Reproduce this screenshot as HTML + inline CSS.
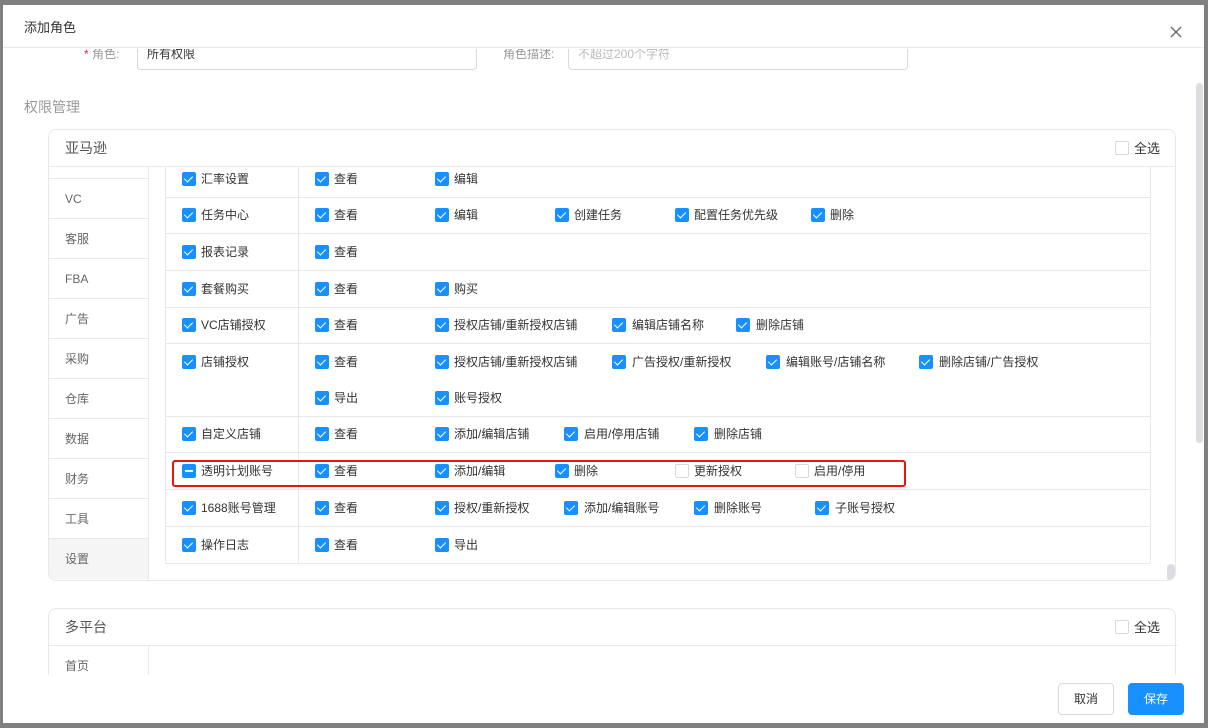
<!DOCTYPE html>
<html><head><meta charset="utf-8"><style>
*{margin:0;padding:0;box-sizing:border-box}
body{width:1208px;height:728px;background:#808080;position:relative;overflow:hidden;font-family:"Liberation Sans","Noto Sans CJK SC",sans-serif;font-size:12px;color:#333}
.a{position:absolute}
.m{position:absolute;left:3px;top:5px;width:1201px;height:718px;background:#fff;overflow:hidden}
.c{position:absolute;width:14px;height:14px;border-radius:2px;background:#1890ff}
.c:after{content:"";position:absolute;left:4px;top:2px;width:4px;height:7px;border:solid #fff;border-width:0 1.5px 1.5px 0;transform:rotate(45deg)}
.u{background:#fff;border:1px solid #d9d9d9}
.u:after{display:none}
.i:after{left:3px;top:6px;width:8px;height:2px;border:0;background:#fff;transform:none}
.t{position:absolute;white-space:nowrap;line-height:14px}
.h{position:absolute;height:1px;background:#e8e8e8}
.v{position:absolute;width:1px;background:#e8e8e8}
.mi{position:absolute;left:0;width:99px;height:40px;line-height:40px;padding-left:16px;color:#666;border-bottom:1px solid #e8e8e8;font-size:12px}
</style></head><body>
<div class="m">
<div class="a" style="left:0;top:44px;width:1201px;height:626px;overflow:hidden">
 <div class="a" style="left:-3px;top:-49px;width:1208px;height:728px">
  <div class="t" style="left:84px;top:47px;color:#999"><span style="color:#f5222d">*</span> 角色:</div>
  <div class="a" style="left:137px;top:38px;width:340px;height:32px;border:1px solid #d9d9d9;border-radius:4px"></div>
  <div class="t" style="left:147px;top:47px;color:#333">所有权限</div>
  <div class="t" style="left:503px;top:47px;color:#999">角色描述:</div>
  <div class="a" style="left:568px;top:38px;width:340px;height:32px;border:1px solid #d9d9d9;border-radius:4px"></div>
  <div class="t" style="left:578px;top:47px;color:#bbb">不超过200个字符</div>
  <div class="t" style="left:24px;top:100px;font-size:14px;color:#999">权限管理</div>

  <div class="a" style="left:48px;top:129px;width:1128px;height:452px;border:1px solid #e8e8e8;border-radius:8px;overflow:hidden">
   <div class="t" style="left:16px;top:11px;font-size:14px;color:#555">亚马逊</div>
   <div class="c u" style="left:1066px;top:11px"></div>
   <div class="t" style="left:1085px;top:12px;font-size:13px">全选</div>
   <div class="h" style="left:0;top:36px;width:1128px"></div>
   <div class="a" style="left:0;top:37px;width:100px;height:414px;border-right:1px solid #e8e8e8;overflow:hidden">
    <div class="mi" style="top:-28px"></div>
    <div class="mi" style="top:12px">VC</div>
    <div class="mi" style="top:52px">客服</div>
    <div class="mi" style="top:92px">FBA</div>
    <div class="mi" style="top:132px">广告</div>
    <div class="mi" style="top:172px">采购</div>
    <div class="mi" style="top:212px">仓库</div>
    <div class="mi" style="top:252px">数据</div>
    <div class="mi" style="top:292px">财务</div>
    <div class="mi" style="top:332px">工具</div>
    <div class="mi" style="top:372px;background:#f5f5f5;border:0">设置</div>
   </div>
   <div class="a" style="left:1118px;top:434px;width:8px;height:17px;border-radius:4px;background:#dcdde0"></div>
  </div>

  <div class="v" style="left:165px;top:166px;height:397px"></div>
  <div class="v" style="left:1150px;top:166px;height:397px"></div>
  <div class="v" style="left:298px;top:166px;height:397px"></div>
  <div class="h" style="left:165px;top:197px;width:985px"></div>
  <div class="h" style="left:165px;top:233px;width:985px"></div>
  <div class="h" style="left:165px;top:270px;width:985px"></div>
  <div class="h" style="left:165px;top:307px;width:985px"></div>
  <div class="h" style="left:165px;top:343px;width:985px"></div>
  <div class="h" style="left:165px;top:416px;width:985px"></div>
  <div class="h" style="left:165px;top:452px;width:985px"></div>
  <div class="h" style="left:165px;top:489px;width:985px"></div>
  <div class="h" style="left:165px;top:526px;width:985px"></div>
  <div class="h" style="left:165px;top:563px;width:985px"></div>

  <div class="c" style="left:182px;top:172px"></div><div class="t" style="left:201px;top:172px">汇率设置</div>
  <div class="c" style="left:315px;top:172px"></div><div class="t" style="left:334px;top:172px">查看</div>
  <div class="c" style="left:435px;top:172px"></div><div class="t" style="left:454px;top:172px">编辑</div>

  <div class="c" style="left:182px;top:208px"></div><div class="t" style="left:201px;top:208px">任务中心</div>
  <div class="c" style="left:315px;top:208px"></div><div class="t" style="left:334px;top:208px">查看</div>
  <div class="c" style="left:435px;top:208px"></div><div class="t" style="left:454px;top:208px">编辑</div>
  <div class="c" style="left:555px;top:208px"></div><div class="t" style="left:574px;top:208px">创建任务</div>
  <div class="c" style="left:675px;top:208px"></div><div class="t" style="left:694px;top:208px">配置任务优先级</div>
  <div class="c" style="left:811px;top:208px"></div><div class="t" style="left:830px;top:208px">删除</div>

  <div class="c" style="left:182px;top:245px"></div><div class="t" style="left:201px;top:245px">报表记录</div>
  <div class="c" style="left:315px;top:245px"></div><div class="t" style="left:334px;top:245px">查看</div>

  <div class="c" style="left:182px;top:282px"></div><div class="t" style="left:201px;top:282px">套餐购买</div>
  <div class="c" style="left:315px;top:282px"></div><div class="t" style="left:334px;top:282px">查看</div>
  <div class="c" style="left:435px;top:282px"></div><div class="t" style="left:454px;top:282px">购买</div>

  <div class="c" style="left:182px;top:318px"></div><div class="t" style="left:201px;top:318px">VC店铺授权</div>
  <div class="c" style="left:315px;top:318px"></div><div class="t" style="left:334px;top:318px">查看</div>
  <div class="c" style="left:435px;top:318px"></div><div class="t" style="left:454px;top:318px">授权店铺/重新授权店铺</div>
  <div class="c" style="left:612px;top:318px"></div><div class="t" style="left:632px;top:318px">编辑店铺名称</div>
  <div class="c" style="left:736px;top:318px"></div><div class="t" style="left:756px;top:318px">删除店铺</div>

  <div class="c" style="left:182px;top:355px"></div><div class="t" style="left:201px;top:355px">店铺授权</div>
  <div class="c" style="left:315px;top:355px"></div><div class="t" style="left:334px;top:355px">查看</div>
  <div class="c" style="left:435px;top:355px"></div><div class="t" style="left:454px;top:355px">授权店铺/重新授权店铺</div>
  <div class="c" style="left:612px;top:355px"></div><div class="t" style="left:632px;top:355px">广告授权/重新授权</div>
  <div class="c" style="left:766px;top:355px"></div><div class="t" style="left:786px;top:355px">编辑账号/店铺名称</div>
  <div class="c" style="left:919px;top:355px"></div><div class="t" style="left:939px;top:355px">删除店铺/广告授权</div>
  <div class="c" style="left:315px;top:391px"></div><div class="t" style="left:334px;top:391px">导出</div>
  <div class="c" style="left:435px;top:391px"></div><div class="t" style="left:454px;top:391px">账号授权</div>

  <div class="c" style="left:182px;top:427px"></div><div class="t" style="left:201px;top:427px">自定义店铺</div>
  <div class="c" style="left:315px;top:427px"></div><div class="t" style="left:334px;top:427px">查看</div>
  <div class="c" style="left:435px;top:427px"></div><div class="t" style="left:454px;top:427px">添加/编辑店铺</div>
  <div class="c" style="left:564px;top:427px"></div><div class="t" style="left:584px;top:427px">启用/停用店铺</div>
  <div class="c" style="left:694px;top:427px"></div><div class="t" style="left:714px;top:427px">删除店铺</div>

  <div class="c i" style="left:182px;top:464px"></div><div class="t" style="left:201px;top:464px">透明计划账号</div>
  <div class="c" style="left:315px;top:464px"></div><div class="t" style="left:334px;top:464px">查看</div>
  <div class="c" style="left:435px;top:464px"></div><div class="t" style="left:454px;top:464px">添加/编辑</div>
  <div class="c" style="left:555px;top:464px"></div><div class="t" style="left:574px;top:464px">删除</div>
  <div class="c u" style="left:675px;top:464px"></div><div class="t" style="left:694px;top:464px">更新授权</div>
  <div class="c u" style="left:795px;top:464px"></div><div class="t" style="left:814px;top:464px">启用/停用</div>
  <div class="a" style="left:172px;top:460px;width:734px;height:27px;border:2px solid #f0120f;border-radius:3px"></div>

  <div class="c" style="left:182px;top:501px"></div><div class="t" style="left:201px;top:501px">1688账号管理</div>
  <div class="c" style="left:315px;top:501px"></div><div class="t" style="left:334px;top:501px">查看</div>
  <div class="c" style="left:435px;top:501px"></div><div class="t" style="left:454px;top:501px">授权/重新授权</div>
  <div class="c" style="left:564px;top:501px"></div><div class="t" style="left:584px;top:501px">添加/编辑账号</div>
  <div class="c" style="left:694px;top:501px"></div><div class="t" style="left:714px;top:501px">删除账号</div>
  <div class="c" style="left:815px;top:501px"></div><div class="t" style="left:835px;top:501px">子账号授权</div>

  <div class="c" style="left:182px;top:538px"></div><div class="t" style="left:201px;top:538px">操作日志</div>
  <div class="c" style="left:315px;top:538px"></div><div class="t" style="left:334px;top:538px">查看</div>
  <div class="c" style="left:435px;top:538px"></div><div class="t" style="left:454px;top:538px">导出</div>

  <div class="a" style="left:48px;top:608px;width:1128px;height:120px;border:1px solid #e8e8e8;border-radius:8px">
   <div class="t" style="left:16px;top:11px;font-size:14px;color:#555">多平台</div>
   <div class="c u" style="left:1066px;top:11px"></div>
   <div class="t" style="left:1085px;top:12px;font-size:13px">全选</div>
   <div class="h" style="left:0;top:36px;width:1128px"></div>
   <div class="v" style="left:99px;top:37px;height:80px"></div>
   <div class="t" style="left:16px;top:50px;color:#666">首页</div>
  </div>
 </div>
</div>
<div class="a" style="left:0;top:0;width:1201px;height:43px;border-bottom:1px solid #e8e8e8;background:#fff"></div>
<div class="t" style="left:21px;top:16px;font-size:13px;color:#333">添加角色</div>
<svg class="a" style="left:1167px;top:21px" width="12" height="12"><path d="M1 1L11 11M11 1L1 11" stroke="#666" stroke-width="1.3"/></svg>
<div class="a" style="left:1193px;top:78px;width:7px;height:360px;border-radius:4px;background:#dcdde0"></div>
<div class="a" style="left:1055px;top:678px;width:56px;height:32px;border:1px solid #d9d9d9;border-radius:4px;text-align:center;line-height:30px;color:#333">取消</div>
<div class="a" style="left:1125px;top:678px;width:56px;height:32px;background:#1890ff;border-radius:4px;text-align:center;line-height:32px;color:#fff">保存</div>
</div>
</body></html>
